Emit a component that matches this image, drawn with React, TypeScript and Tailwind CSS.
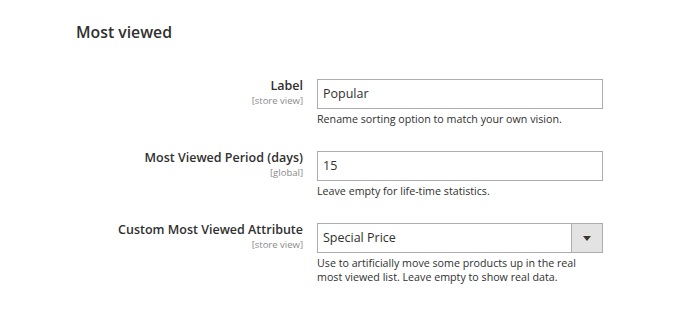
import React from 'react';

const font = { fontFamily: '"Open Sans", "Liberation Sans", sans-serif' };

type RowProps = {
  label: string;
  scope: string;
  children: React.ReactNode;
  note: React.ReactNode;
};

const Row: React.FC<RowProps> = ({ label, scope, children, note }) => (
  <div className="flex">
    <div className="w-[226px] shrink-0 text-right -mt-[2px]">
      <div className="text-[12.5px] leading-[17px] font-semibold text-[#303030]">{label}</div>
      <div className="text-[9.5px] leading-[13px] text-[#8a8a8a]">{scope}</div>
    </div>
    <div className="ml-[14px] w-[286px]">
      {children}
      <div className="mt-[3px] text-[10.7px] leading-[14px] text-[#303030]">{note}</div>
    </div>
  </div>
);

export default function App() {
  return (
    <div className="w-[674px] h-[331px] bg-white pl-[76px] pt-[22px]" style={font}>
      <h2 className="text-[15.8px] leading-[20px] font-semibold text-[#303030]">Most viewed</h2>

      <div className="mt-[37px] ml-[1px] flex flex-col gap-[25px]">
        <Row label="Label" scope="[store view]" note="Rename sorting option to match your own vision.">
          <div className="h-[30px] border border-[#adadad] px-[5px] flex items-center text-[12.5px] text-[#303030]">
            Popular
          </div>
        </Row>

        <Row label="Most Viewed Period (days)" scope="[global]" note="Leave empty for life-time statistics.">
          <div className="h-[30px] border border-[#adadad] px-[5px] flex items-center text-[12.5px] text-[#303030]">
            15
          </div>
        </Row>

        <Row
          label="Custom Most Viewed Attribute"
          scope="[store view]"
          note={
            <>
              Use to artificially move some products up in the real
              <br />
              most viewed list. Leave empty to show real data.
            </>
          }
        >
          <div className="h-[30px] border border-[#adadad] flex items-stretch text-[12.5px] text-[#303030]">
            <div className="flex-1 px-[5px] flex items-center">Special Price</div>
            <div className="w-[31px] bg-[#e3e3e3] border-l border-[#adadad] flex items-center justify-center">
              <svg width="8" height="5" viewBox="0 0 8 5">
                <path d="M0 0h8L4 5z" fill="#41362f" />
              </svg>
            </div>
          </div>
        </Row>
      </div>
    </div>
  );
}
